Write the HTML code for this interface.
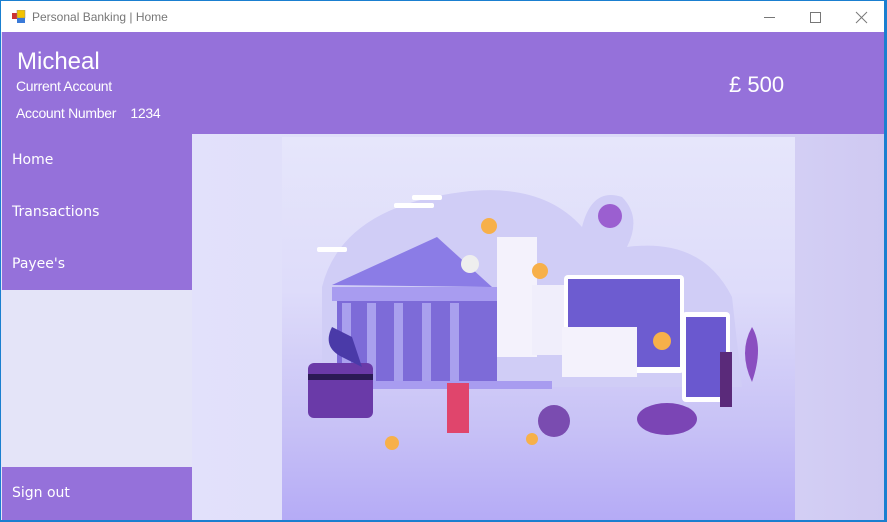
<!DOCTYPE html>
<html><head><meta charset="utf-8"><style>
*{margin:0;padding:0;box-sizing:border-box}
body{width:887px;height:522px;overflow:hidden;background:#1a7fd0;font-family:"Liberation Sans",sans-serif;position:relative}
.win{position:absolute;left:1px;top:0;width:883px;height:520px;background:#e4e4f8;overflow:hidden}
.title{position:absolute;left:0;top:0;width:883px;height:32px;background:#fff;border-top:1px solid #1a7fd0}
.title span{position:absolute;left:31px;top:9px;font-size:12px;color:#777}
.hdr{position:absolute;left:1px;top:32px;width:882px;height:102px;background:#9571da;color:#fff}
.side{position:absolute;left:1px;top:134px;width:190px;height:156px;background:#9571da}
.so{position:absolute;left:1px;top:467px;width:190px;height:53px;background:#9571da}
.nav{position:absolute;left:10px;color:#fff;font-size:14px;font-family:"DejaVu Sans",sans-serif}
.main{position:absolute;left:191px;top:134px;width:692px;height:386px;background:linear-gradient(90deg,#e2e1fb,#dcdaf8 60%,#cfc9f2)}
.img{position:absolute;left:90px;top:3px;width:513px;height:383px;background:linear-gradient(180deg,#e6e6fb 0%,#dedcfa 40%,#c8c2f6 75%,#b5abf6 100%)}
</style></head><body>
<div class="win">
<div class="title">
<svg style="position:absolute;left:11px;top:9px" width="14" height="14"><rect x="0" y="3" width="6" height="6" fill="#c33"/><rect x="5" y="0" width="8" height="8" fill="#f2c200" stroke="#888" stroke-width=".5"/><rect x="5" y="8" width="8" height="5" fill="#3a7ad8"/></svg>
<span>Personal Banking | Home</span>
<svg style="position:absolute;left:763px;top:10px" width="110" height="14" stroke="#777" fill="none"><line x1="0" y1="6.5" x2="11" y2="6.5"/><rect x="46.5" y="1.5" width="10" height="10"/><line x1="92" y1="1" x2="103" y2="12"/><line x1="103" y1="1" x2="92" y2="12"/></svg>
</div>
<div class="hdr">
<div style="position:absolute;left:15px;top:16px;font-size:24px">Micheal</div>
<div style="position:absolute;left:14px;top:46px;font-size:14px;letter-spacing:-.3px">Current Account</div>
<div style="position:absolute;left:14px;top:73px;font-size:14px;letter-spacing:-.3px">Account Number&nbsp;&nbsp;&nbsp; 1234</div>
<div style="position:absolute;left:727px;top:40px;font-size:22px">£ 500</div>
</div>
<div class="side">
<div class="nav" style="top:18px">Home</div>
<div class="nav" style="top:70px">Transactions</div>
<div class="nav" style="top:122px">Payee's</div>
</div>
<div class="so"><div class="nav" style="top:18px">Sign out</div></div>
<div class="main"><div class="img">
<svg width="513" height="383" viewBox="0 0 513 383">
<path d="M40 150 Q60 70 180 55 Q260 45 300 90 Q310 50 340 60 Q360 80 345 110 Q420 100 450 160 L460 250 L40 250Z" fill="#d0cdf6"/>
<rect x="130" y="58" width="30" height="5" rx="2" fill="#fff"/><rect x="112" y="66" width="40" height="5" rx="2" fill="#fff"/>
<rect x="35" y="110" width="30" height="5" rx="2" fill="#fff"/>
<polygon points="50,148 155,100 210,150" fill="#8b7ce6"/>
<rect x="50" y="150" width="165" height="14" fill="#a89cf0"/>
<rect x="55" y="164" width="160" height="82" fill="#7d6bd8"/>
<g fill="#a9a0ee"><rect x="60" y="166" width="9" height="80"/><rect x="85" y="166" width="9" height="80"/><rect x="112" y="166" width="9" height="80"/><rect x="140" y="166" width="9" height="80"/><rect x="168" y="166" width="9" height="80"/></g>
<rect x="45" y="244" width="225" height="8" fill="#a89cf0"/>
<circle cx="188" cy="127" r="9" fill="#eee"/>
<path d="M215 100 h40 v120 h-40z" fill="#f4f2fc"/>
<path d="M250 148 h50 v70 h-50z" fill="#f0eefb"/>
<rect x="282" y="138" width="120" height="98" rx="4" fill="#fff"/>
<rect x="286" y="142" width="112" height="88" fill="#6d5cd0"/>
<rect x="280" y="190" width="75" height="50" fill="#f4f2fc"/>
<rect x="400" y="175" width="48" height="90" rx="4" fill="#fff"/>
<rect x="404" y="180" width="40" height="80" fill="#6a58cf"/>
<rect x="26" y="226" width="65" height="55" rx="6" fill="#6a3aa8"/>
<rect x="26" y="237" width="65" height="6" fill="#2b1a55"/>
<circle cx="180" cy="155" r="0" />
<ellipse cx="272" cy="284" rx="16" ry="16" fill="#7a4cb0"/>
<ellipse cx="385" cy="282" rx="30" ry="16" fill="#7b45b5"/>
<circle cx="328" cy="79" r="12" fill="#9b5fd0"/>
<circle cx="207" cy="89" r="8" fill="#f7b04a"/><circle cx="258" cy="134" r="8" fill="#f7b04a"/><circle cx="380" cy="204" r="9" fill="#f7b04a"/><circle cx="110" cy="306" r="7" fill="#f7b04a"/><circle cx="250" cy="302" r="6" fill="#f7b04a"/>
<path d="M470 190 q12 20 0 55 q-14 -30 0 -55z" fill="#8a4ec0"/>
<path d="M50 190 q-10 20 10 30 l20 10 l-10 -30z" fill="#4a3aa8"/>
<rect x="165" y="246" width="22" height="50" fill="#e0456c"/>
<rect x="438" y="215" width="12" height="55" fill="#5a2a7a"/>
</svg>
</div></div>
</div>
</body></html>
